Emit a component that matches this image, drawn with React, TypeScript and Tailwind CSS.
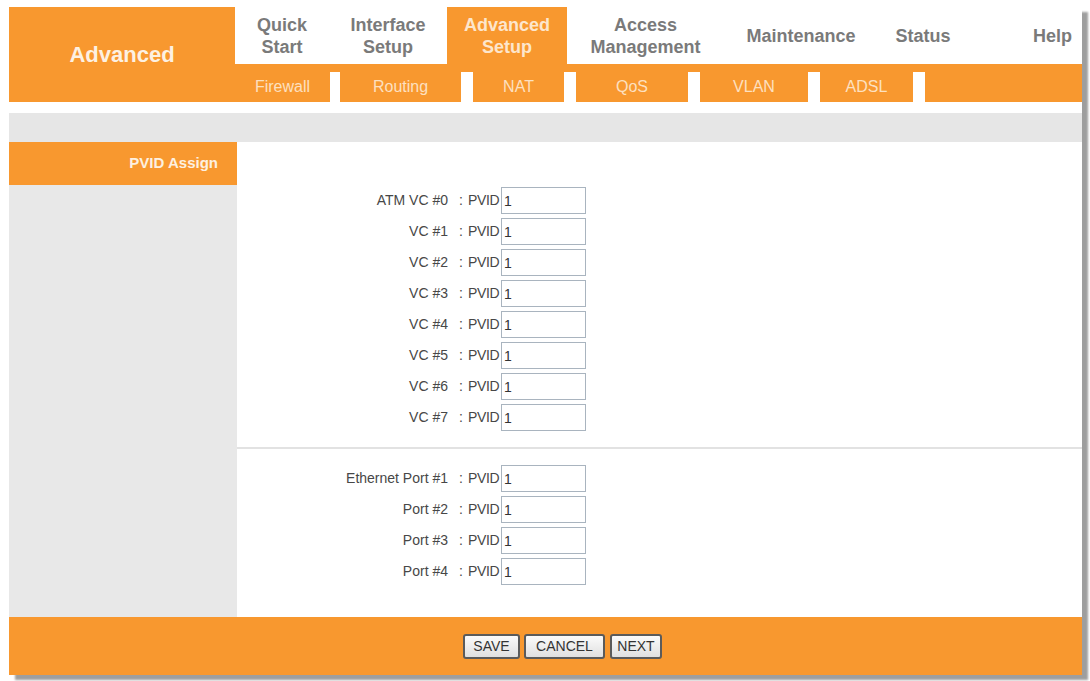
import React from 'react';

interface TopItem {
    lines: string[];
    width: string;
    active?: boolean;
    right?: boolean;
}

const topMenu: TopItem[] = [
    { lines: ['Quick', 'Start'], width: 'w-[94px]' },
    { lines: ['Interface', 'Setup'], width: 'w-[118px]' },
    { lines: ['Advanced', 'Setup'], width: 'w-[120px]', active: true },
    { lines: ['Access', 'Management'], width: 'w-[157px]' },
    { lines: ['Maintenance'], width: 'w-[154px]' },
    { lines: ['Status'], width: 'w-[90px]' },
    { lines: ['Help'], width: 'flex-1', right: true },
];

const subTabs = [
    { label: 'Firewall', width: 'w-[95px]', gap: 'w-[10px]' },
    { label: 'Routing', width: 'w-[121px]', gap: 'w-[12px]' },
    { label: 'NAT', width: 'w-[91px]', gap: 'w-[12px]' },
    { label: 'QoS', width: 'w-[112px]', gap: 'w-[12px]' },
    { label: 'VLAN', width: 'w-[108px]', gap: 'w-[12px]' },
    { label: 'ADSL', width: 'w-[93px]', gap: 'w-[12px]' },
];

const vcRows = ['ATM VC #0', 'VC #1', 'VC #2', 'VC #3', 'VC #4', 'VC #5', 'VC #6', 'VC #7'];
const portRows = ['Ethernet Port #1', 'Port #2', 'Port #3', 'Port #4'];

const PvidRow: React.FC<{ label: string }> = ({ label }) => (
    <div className="flex items-center h-[31px]">
        <div className="w-[211px] text-right whitespace-nowrap">{label}</div>
        <span className="ml-[11px] mr-[5px]">:</span>
        <span className="w-[33px] tracking-[-0.3px]">PVID</span>
        <input
            defaultValue="1"
            className="w-[85px] h-[27px] border border-[#a9b4bf] bg-white px-[2px] text-[14px] text-[#333] outline-none"
        />
    </div>
);

const App: React.FC = () => {
    return (
        <div className="min-h-screen bg-white pt-[7px] pl-[9px] font-['Liberation_Sans',Arial,sans-serif]">
            <div className="w-[1073px] shadow-[6px_5px_2px_rgba(0,0,0,0.38)]">
                {/* header */}
                <div className="flex h-[95px] bg-white">
                    <div className="w-[226px] bg-[#f8982f] flex items-center justify-center text-[22px] font-bold text-[#fdf1e2]">
                        Advanced
                    </div>
                    <div className="flex-1 flex flex-col">
                        <div className="h-[57px] flex">
                            {topMenu.map((item) => (
                                <div
                                    key={item.lines.join(' ')}
                                    className={`${item.width} flex flex-col justify-center text-[18px] leading-[22px] font-bold ${
                                        item.right ? 'items-end pr-[10px]' : 'items-center'
                                    } ${item.active ? 'bg-[#f8982f] text-[#fde6cc]' : 'text-[#7a7a7a]'}`}
                                >
                                    {item.lines.map((l) => (
                                        <span key={l}>{l}</span>
                                    ))}
                                </div>
                            ))}
                        </div>
                        <div className="h-[38px] bg-[#f8982f] flex">
                            {subTabs.map((t) => (
                                <React.Fragment key={t.label}>
                                    <div className={`${t.width} pt-[8px] flex items-center justify-center text-[16px] text-[#fde0c0]`}>
                                        {t.label}
                                    </div>
                                    <div className={`${t.gap} mt-[8px] bg-white`} />
                                </React.Fragment>
                            ))}
                            <div className="flex-1" />
                        </div>
                    </div>
                </div>

                <div className="h-[11px] bg-white" />
                <div className="h-[29px] bg-[#e6e6e6]" />

                {/* body */}
                <div className="flex">
                    <div className="w-[228px] bg-[#e8e8e8]">
                        <div className="h-[43px] bg-[#f8982f] flex items-center justify-end pr-[19px] text-[15px] font-bold text-[#fdf0e0]">
                            PVID Assign
                        </div>
                    </div>
                    <div className="flex-1 bg-white text-[14px] text-[#474747] pt-[43px] pb-[30px]">
                        {vcRows.map((r) => (
                            <PvidRow key={r} label={r} />
                        ))}
                        <div className="mt-[14px] mb-[14px] h-[2px] bg-[#e2e2e2]" />
                        {portRows.map((r) => (
                            <PvidRow key={r} label={r} />
                        ))}
                    </div>
                </div>

                {/* footer */}
                <div className="h-[58px] bg-[#f8982f] flex items-center pl-[454px] gap-[4px]">
                    <button className="w-[57px] h-[25px] border-2 border-[#5b5b5b] rounded-[3px] bg-linear-to-b from-[#fbfbfb] to-[#e0e0e0] text-[14px] text-[#333]">
                        SAVE
                    </button>
                    <button className="w-[81px] h-[25px] border-2 border-[#5b5b5b] rounded-[3px] bg-linear-to-b from-[#fbfbfb] to-[#e0e0e0] text-[14px] text-[#333]">
                        CANCEL
                    </button>
                    <button className="ml-[1px] w-[52px] h-[25px] border-2 border-[#5b5b5b] rounded-[3px] bg-linear-to-b from-[#fbfbfb] to-[#e0e0e0] text-[14px] text-[#333]">
                        NEXT
                    </button>
                </div>
            </div>
        </div>
    );
};

export default App;
